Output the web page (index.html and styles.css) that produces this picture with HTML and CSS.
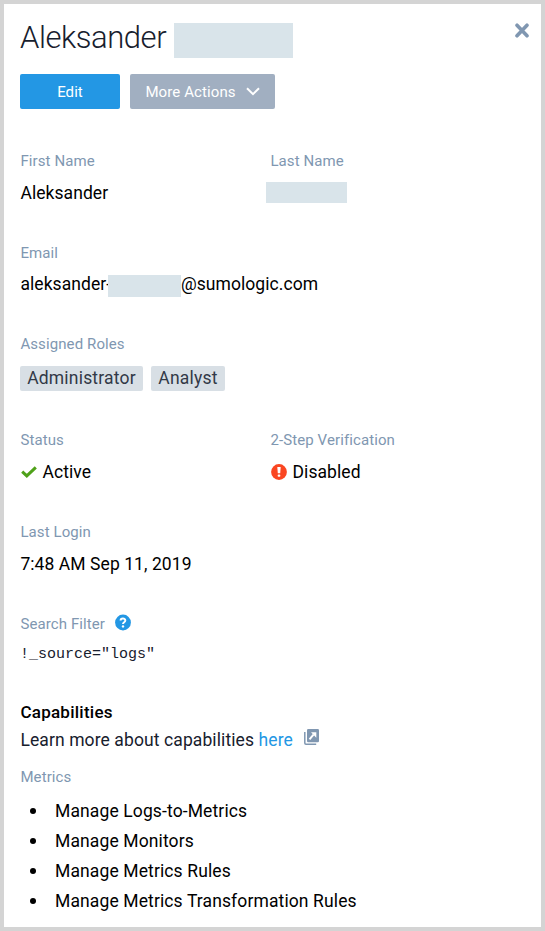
FILE: index.html
```html
<!DOCTYPE html>
<html lang="en">
<head>
<meta charset="utf-8">
<title>User details</title>
<link rel="stylesheet" href="styles.css">
</head>
<body>
<main class="panel">
  <header class="header">
    <h1 class="title"><span class="title-text">Aleksander</span><span class="redacted redacted-title"></span></h1>
    <button class="close" aria-label="Close">
      <svg width="14" height="15" viewBox="0 0 14 15"><path d="M2 2.2 12 12.8M12 2.2 2 12.8"/></svg>
    </button>
  </header>
  <div class="actions">
    <button class="btn btn-primary">Edit</button>
    <button class="btn btn-more"><span>More Actions</span>
      <svg width="14" height="9" viewBox="0 0 14 9"><path d="M1 1.2 7 7.2 13 1.2"/></svg>
    </button>
  </div>

  <section class="row">
    <div class="field"><div class="label">First Name</div><div class="value">Aleksander</div></div>
    <div class="field"><div class="label">Last Name</div><div class="value"><span class="redacted redacted-last"></span></div></div>
  </section>
  <section class="row row-email">
    <div class="field"><div class="label">Email</div><div class="value email"><span class="email-user">aleksander-</span><span class="redacted redacted-email"></span><span>@sumologic.com</span></div></div>
  </section>
  <section class="row row-roles">
    <div class="field"><div class="label">Assigned Roles</div><div class="tags"><span class="tag">Administrator</span><span class="tag tag-analyst">Analyst</span></div></div>
  </section>
  <section class="row">
    <div class="field"><div class="label">Status</div><div class="value with-icon">
      <svg width="16" height="12" viewBox="0 0 16 12"><path class="check" d="M1.2 5.6 5.8 9.9 14.8 1.3"/></svg><span>Active</span></div></div>
    <div class="field"><div class="label">2-Step Verification</div><div class="value with-icon">
      <svg width="16" height="16" viewBox="0 0 16 16"><circle cx="8" cy="8" r="7.9" fill="#fa4621"/><path d="M6.3 3h3.4L9.2 9.2H6.8Z" fill="#fff"/><rect x="6.7" y="10.4" width="2.6" height="2.4" rx=".8" fill="#fff"/></svg><span>Disabled</span></div></div>
  </section>
  <section class="row">
    <div class="field"><div class="label">Last Login</div><div class="value">7:48 AM Sep 11, 2019</div></div>
  </section>
  <section class="row row-filter">
    <div class="field"><div class="label label-help"><span>Search Filter</span>
      <svg width="16" height="17" viewBox="0 0 16 17"><circle cx="8" cy="8.5" r="7.9" fill="#2397e4"/><path d="M5.6 6.6C5.6 3.8 10.3 3.8 10.3 6.5 10.3 8.3 8 8.1 8 10" fill="none" stroke="#fff" stroke-width="2"/><circle cx="8" cy="12.4" r="1.2" fill="#fff"/></svg></div>
      <code class="code">!_source="logs"</code></div>
  </section>

  <section class="capabilities">
    <h2 class="heading">Capabilities</h2>
    <p class="learn"><span>Learn more about capabilities <a class="link">here</a></span>
      <svg width="15" height="16" viewBox="0 0 15 16"><path d="M.8 3v11q0 1.2 1.2 1.2h10.2" fill="none" stroke="#8097b1" stroke-width="1.5"/><rect x="3" y="0" width="12" height="13.3" rx="1.3" fill="#8097b1"/><path d="m5.5 10.3 4-4.6" stroke="#fff" stroke-width="2"/><path d="M7 3.2h5.3v5.6Z" fill="#fff"/></svg></p>
    <div class="label">Metrics</div>
    <ul class="list">
      <li>Manage Logs-to-Metrics</li>
      <li>Manage Monitors</li>
      <li>Manage Metrics Rules</li>
      <li>Manage Metrics Transformation Rules</li>
    </ul>
  </section>
</main>
</body>
</html>
```
FILE: styles.css
```css
* { box-sizing: border-box; }
body { margin: 0; font-family: Roboto, sans-serif; color: #000; }
.panel { height: 931px; border: 4px solid #d4d4d4; background: #fff; padding: 14px 12px 0 16px; overflow: hidden; }
.header { display: flex; justify-content: space-between; height: 56px; }
.title { display: flex; margin: 0; font-size: 31px; font-weight: 300; line-height: 40px; letter-spacing: -.45px; color: #17202d; }
.title-text { width: 153.5px; white-space: nowrap; }
.redacted { display: block; background: #d9e4ea; flex: none; }
.redacted-title { width: 119px; height: 35px; margin-top: 4.5px; }
.close { width: 14px; height: 15px; margin: 4.5px 0 0; padding: 0; border: 0; background: none; }
.close svg { display: block; }
.close path { stroke: #8097b1; stroke-width: 3.6; stroke-linecap: round; }
.actions { display: flex; gap: 10px; height: 77px; }
.btn { height: 35px; border: 0; border-radius: 2px; padding: 0; font-family: inherit; font-size: 15px; letter-spacing: .05px; color: #fff; }
.btn-primary { width: 100px; background: #2397e4; }
.btn-more { display: flex; align-items: center; justify-content: center; gap: 10px; width: 145px; background: #a1afc1; }
.btn-more span { letter-spacing: .1px; }
.btn-more path { fill: none; stroke: #fff; stroke-width: 2; }
.row { display: grid; grid-template-columns: 250px 1fr; height: 92px; }
.row-email { height: 91px; }
.row-roles { height: 96px; }
.row-filter { height: 86px; }
.label { padding-left: .4px; font-size: 15px; line-height: 20px; letter-spacing: .1px; color: #8097b1; white-space: nowrap; }
.value { margin-top: 10px; padding-left: .4px; height: 24px; font-size: 17.5px; line-height: 24px; letter-spacing: .07px; white-space: nowrap; }
.redacted-last { width: 81px; height: 21px; margin-left: -4px; margin-top: 10.5px; }
.email { display: flex; margin-top: 9px; }
.email-user { flex: none; width: 88px; }
.redacted-email { position: relative; width: 73px; height: 22px; margin: 2.5px -.5px 0 0; }
.email span:last-child { position: relative; }
.tags { display: flex; gap: 8px; margin-top: 12px; }
.tag { width: 123px; height: 25px; border-radius: 2px; background: #d8dfe5; color: #323947; font-size: 17.5px; line-height: 25px; letter-spacing: .2px; text-align: center; }
.tag-analyst { width: 74px; }
.with-icon { display: flex; align-items: center; gap: 5.5px; padding-left: 0; }
.with-icon svg { margin-left: 1px; }
.check { fill: none; stroke: #4fa119; stroke-width: 3; }
.label-help { display: flex; gap: 10px; }
.code { display: block; margin-top: 11px; font: 15px/20px "Liberation Mono", monospace; color: #17202d; }
.heading { margin: 0; padding-left: .4px; font-size: 17px; font-weight: 500; line-height: 24px; letter-spacing: .25px; }
.learn { display: flex; gap: 11px; margin: 4px 0 15px; padding-left: .4px; font-size: 17.5px; line-height: 24px; letter-spacing: .1px; color: #17202d; }
.learn svg { margin-top: 1px; }
.link { color: #2397e4; }
.list { margin: 9px 0 0; padding: 0 0 0 35px; font-size: 17.5px; line-height: 30px; letter-spacing: .12px; list-style: none; }
.list li { display: flex; align-items: center; }
.list li::before { content: ""; width: 6px; height: 6px; margin: 0 19px 0 -25px; border-radius: 50%; background: #000; }
```
